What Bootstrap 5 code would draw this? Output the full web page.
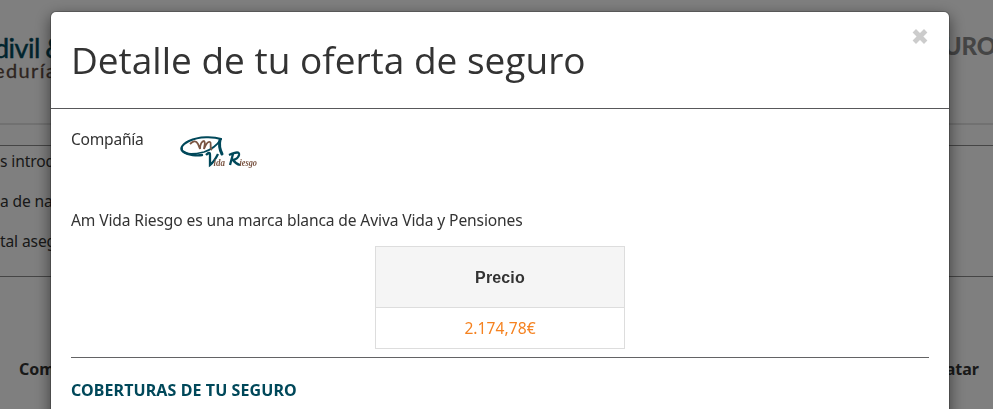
<!DOCTYPE html>
<html lang="es">
<head>
<meta charset="utf-8">
<meta name="viewport" content="width=device-width, initial-scale=1">
<title>Detalle de tu oferta de seguro</title>
<link href="https://cdn.jsdelivr.net/npm/bootstrap@5.3.0/dist/css/bootstrap.min.css" rel="stylesheet">
<style>
body{font-family:"Noto Sans","Open Sans",sans-serif;font-size:15.6px;letter-spacing:-.13px;line-height:20px;color:#333;height:409px;background:#fff}
.site-head{height:125px;border-bottom:2px solid #e2e2e2}
.brand{width:110px;margin-left:-6px;padding-top:34px;white-space:nowrap}
.brand-a{font:400 27px/28px Lato,sans-serif;color:#00485a;-webkit-text-stroke:.5px #00485a;letter-spacing:-.5px;word-spacing:-1px}
.brand-b{font:400 20px/20px Lato,sans-serif;color:#5d4a3f;-webkit-text-stroke:.3px #5d4a3f;letter-spacing:1.4px;margin-top:-2px}
.site-title{font:900 24px/30px Lato,sans-serif;color:#8a8a8a;width:90px;padding-top:31px;margin-right:-3px}
.intro{margin-top:20px;height:132px;border-top:1px solid #8a8a8a;border-bottom:1px solid #8a8a8a;padding-top:5px;white-space:nowrap}
.intro p{margin-bottom:20px;height:20px}
.cols{margin-top:82px;padding:0 14px 0 19px;font-weight:700;font-size:16px;letter-spacing:0}
.shade{position:fixed;inset:0;background:rgba(0,0,0,.5);z-index:10}
.offer{display:block;overflow:hidden;padding:11px 0 0}
.offer .modal-dialog{max-width:900px;width:900px;margin:0 0 0 50px}
.offer .modal-content{border:1px solid rgba(0,0,0,.2);border-radius:6px;box-shadow:0 5px 15px rgba(0,0,0,.5);background-clip:padding-box;height:520px;color:#333}
.offer .modal-header{height:97px;border-bottom:1px solid #58585a;padding:0 20px}
.offer h1{font:400 37px/42px "Open Sans",sans-serif;letter-spacing:0;margin:27px 0 0}
.x-btn{margin:16px 1px 0 0;width:16px;height:16px;line-height:0}
.body-in{width:858px}
.company{height:101px;padding-top:20px}
.company span{width:109px;letter-spacing:-.25px}
.mark-am text{font-family:"Liberation Serif",serif;font-style:italic;font-weight:700;letter-spacing:0}
.note-line{height:20px;margin:0 0 16px;white-space:nowrap}
.price{width:250px;border:1px solid #ddd}
.price-h{height:61px;padding-top:1px;background:#f5f5f5;border-bottom:1px solid #ddd;font:700 16px/20px "Liberation Sans",sans-serif;letter-spacing:.15px}
.price-v{height:40px;color:#f58220;letter-spacing:.05px}
.rule{height:1px;background:#636365;margin:8px 0 22px}
.offer h2{font:700 16px/20px "Noto Sans",sans-serif;letter-spacing:.1px;color:#00485a;white-space:nowrap;margin:0}
</style>
</head>
<body class="overflow-hidden">
<header class="site-head d-flex justify-content-between">
  <div class="brand"><div class="brand-a">divil &amp;</div><div class="brand-b">eduría</div></div>
  <div class="site-title d-flex justify-content-end"><span>SEGURO</span></div>
</header>
<section class="intro"><p>s introducidos</p><p>a de nacimiento</p><p>tal asegurado</p></section>
<div class="cols d-flex justify-content-between"><span>Compañía</span><span>Contratar</span></div>
<div class="shade"></div>
<div class="modal offer" tabindex="-1">
  <div class="modal-dialog">
    <div class="modal-content">
      <div class="modal-header d-flex align-items-start justify-content-between">
        <h1>Detalle de tu oferta de seguro</h1>
        <div class="x-btn" role="button" aria-label="Cerrar"><svg width="16" height="16" viewBox="0 0 16 16"><path d="M2.3 2.8l11.4 11.4M13.7 2.8L2.3 14.2" stroke="#ccc" stroke-width="4.8"/></svg></div>
      </div>
      <div class="modal-body p-0">
        <div class="mx-auto body-in">
          <div class="company d-flex"><span>Compañía</span>
            <svg class="mark-am" width="80" height="42" viewBox="0 0 80 42">
              <g fill="none" stroke="#00485a" stroke-linecap="round">
                <path d="M41 10C34 7.500 19 7 9 12C1 16-1 21 4 23" stroke-width="2"/>
                <path d="M2 19C1 26 12 26 24 23C33 20 38 15 41 10" stroke-width="1.8"/>
                <path d="M40 11C39 15 40 21 42 25" stroke-width="3"/>
                <path d="M4 23C8 26 17 27 22 26" stroke-width="2.4"/>
              </g>
              <path d="M10 15C13 12 16 11 18 15L20 20C20 15 22 12 24 12C26 13 24 18 24 20C26 15 28 12 30 13C32 14 29 19 32 21" fill="none" stroke="#7a5543" stroke-width="1.8"/>
              <path d="M26 26Q30 22 30 26L30 36Q34 33 38 25" fill="none" stroke="#00485a" stroke-width="2.3"/>
              <text x="33.500" y="36.500" font-size="10" fill="#7a5543" textLength="11.5" lengthAdjust="spacingAndGlyphs">ida</text>
              <path d="M53 25L50 36M49 26Q60 21 59 26Q58 30 53 31Q56 35 60 36" fill="none" stroke="#00485a" stroke-width="2.3"/>
              <text x="59.5" y="36.500" font-size="9.500" fill="#7a5543" textLength="17.5" lengthAdjust="spacingAndGlyphs">iesgo</text>
            </svg>
          </div>
          <p class="note-line">Am Vida Riesgo es una marca blanca de Aviva Vida y Pensiones</p>
          <div class="price mx-auto text-center">
            <div class="price-h d-flex align-items-center justify-content-center">Precio</div>
            <div class="price-v d-flex align-items-center justify-content-center">2.174,78€</div>
          </div>
          <div class="rule"></div>
          <h2>COBERTURAS DE TU SEGURO</h2>
        </div>
      </div>
    </div>
  </div>
</div>
<script src="https://cdn.jsdelivr.net/npm/bootstrap@5.3.0/dist/js/bootstrap.bundle.min.js"></script>
</body>
</html>
